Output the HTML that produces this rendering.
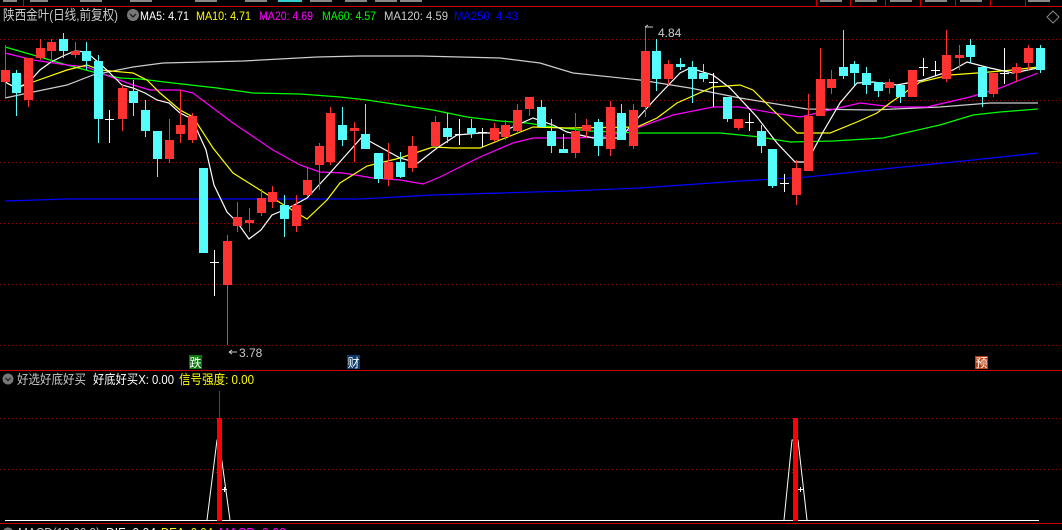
<!DOCTYPE html>
<html><head><meta charset="utf-8"><style>
html,body{margin:0;padding:0;background:#000;width:1062px;height:530px;overflow:hidden}
svg{display:block}
text{font-family:"Liberation Sans","Noto Sans CJK SC",sans-serif}
</style></head><body>
<svg width="1062" height="530" xmlns="http://www.w3.org/2000/svg">
<rect width="1062" height="530" fill="#000"/>
<g fill="#888"><rect x="3" y="0" width="14" height="2"/><rect x="30" y="0" width="18" height="2"/><rect x="80" y="0" width="22" height="2"/><rect x="130" y="0" width="22" height="2"/><rect x="195" y="0" width="22" height="2"/><rect x="245" y="0" width="22" height="2"/><rect x="310" y="0" width="22" height="2"/><rect x="345" y="0" width="22" height="2"/><rect x="375" y="0" width="22" height="2"/><rect x="400" y="0" width="22" height="2"/><rect x="820" y="0" width="22" height="2"/><rect x="855" y="0" width="22" height="2"/><rect x="890" y="0" width="22" height="2"/><rect x="925" y="0" width="22" height="2"/><rect x="960" y="0" width="22" height="2"/><rect x="1028" y="0" width="22" height="2"/></g>
<rect x="278" y="0" width="24" height="2" fill="#3cc"/>
<rect x="0" y="6" width="1062" height="1" fill="#c00"/>
<g fill="#c00"><rect x="23" y="0" width="1" height="6"/><rect x="816" y="0" width="1" height="6"/><rect x="850" y="0" width="1" height="6"/><rect x="885" y="0" width="1" height="6"/><rect x="920" y="0" width="1" height="6"/><rect x="955" y="0" width="1" height="6"/><rect x="990" y="0" width="1" height="6"/><rect x="1025" y="0" width="1" height="6"/></g>
<text x="3" y="20" font-size="14" fill="#c8c8c8" textLength="115" lengthAdjust="spacingAndGlyphs">陕西金叶(日线,前复权)</text>
<circle cx="133" cy="15" r="6" fill="#777"/><path d="M130 14l3 3 3-3" stroke="#222" stroke-width="1.5" fill="none"/>
<g font-size="12"><text x="140" y="20" fill="#fff" textLength="49" lengthAdjust="spacingAndGlyphs">MA5: 4.71</text><text x="196" y="20" fill="#ff0" textLength="55" lengthAdjust="spacingAndGlyphs">MA10: 4.71</text><text x="259" y="20" fill="#f0f" textLength="54" lengthAdjust="spacingAndGlyphs">MA20: 4.69</text><text x="322" y="20" fill="#0f0" textLength="54" lengthAdjust="spacingAndGlyphs">MA60: 4.57</text><text x="384" y="20" fill="#ccc" textLength="64" lengthAdjust="spacingAndGlyphs">MA120: 4.59</text><text x="454" y="20" fill="#00f" textLength="64" lengthAdjust="spacingAndGlyphs">MA250: 4.43</text></g>
<path d="M1053 11l6 6-6 6-6-6z" stroke="#888" fill="none"/>
<g stroke="#900" stroke-dasharray="1 3"><path d="M0 39.5H1062M0 100.5H1062M0 162.5H1062M0 223.5H1062M0 284.5H1062M0 345.5H1062M0 418.5H1062M0 469.5H1062"/></g>
<g fill="none" stroke-width="1.2">
<polyline stroke="#ccc" points="5,98 33,92 67,85 93,75 133,67 163,63 243,61 317,57 360,56 420,56 500,58 540,63 573,73 640,80 690,88 740,98 807,109 873,110 940,107 990,103 1038,103"/>
<polyline stroke="#00f" points="5,201 67,199 200,199 340,199 360,199 433,195 500,193 567,191 640,188 740,181 807,177 873,170 973,160 1038,153"/>
<polyline stroke="#0f0" points="5,47 33,55 67,65 97,73 120,78 140,79 173,83 217,88 253,93 300,94 340,97 367,100 400,105 433,110 467,117 500,121 527,123 553,127 590,131 637,133 720,133 760,137 790,142 833,141 883,138 900,134 940,125 973,115 1000,112 1038,109"/>
<polyline stroke="#f0f" points="5,53 33,60 67,65 87,67 100,73 133,85 150,90 180,90 193,93 233,123 273,150 300,165 320,172 343,173 373,178 400,180 423,184 440,177 460,167 480,157 513,143 533,138 573,138 600,137 620,133 637,128 673,115 713,107 740,107 773,113 800,117 830,110 860,103 893,107 927,107 970,97 1000,88 1020,80 1038,73"/>
<polyline stroke="#ff0" points="5,82 17,88 33,82 67,70 87,65 100,70 133,73 147,80 160,93 180,110 193,117 213,148 233,173 260,190 287,207 307,219 327,200 340,183 367,166 400,158 433,147 453,148 480,148 500,140 533,127 567,128 637,127 657,118 677,103 713,87 740,85 753,90 773,110 797,133 830,133 857,122 877,113 890,103 920,82 950,75 977,73 1013,70 1038,67"/>
<polyline stroke="#fff" points="5,82 16,88 28,83 40,70 51,62 63,56 75,51 86,52 98,62 109,72 122,85 133,88 145,93 157,100 169,103 180,113 192,119 206,150 214,185 227,212 237,222 249,239 261,230 272,215 284,210 296,204 307,198 330,173 362,137 380,147 400,158 418,163 437,148 457,135 480,133 500,133 517,125 533,118 553,125 567,132 593,138 620,138 637,119 657,97 680,73 690,68 713,75 730,88 757,117 777,143 795,162 807,162 823,132 840,103 857,83 873,82 897,85 923,80 953,70 967,62 990,68 1013,73 1038,68"/>
</g>
<path stroke="#ff3232" fill="none" d="M5.5 45V97M28.5 58V107M40.5 39V60M51.5 39V63M75.5 42V58M122.5 85V131M169.5 119V163M180.5 90V143M192.5 113V143M227.5 235V345M237.5 202V232M249.5 208V232M261.5 189V216M272.5 186V208M296.5 195V232M307.5 168V197M319.5 143V190M330.5 107V165M354.5 122V162M388.5 143V186M412.5 136V172M435.5 116V146M494.5 123V142M505.5 120V140M517.5 104V133M529.5 97V116M575.5 113V158M586.5 119V138M610.5 101V156M633.5 104V149M645.5 27V117M668.5 60V85M738.5 119V130M796.5 160V205M808.5 94V171M820.5 48V116M831.5 70V94M889.5 79V94M912.5 70V97M946.5 30V82M959.5 45V70M993.5 73V97M1016.5 63V82M1028.5 45V70"/>
<g fill="#ff3232">
<rect x="1" y="70" width="9" height="12"/><rect x="24" y="58" width="9" height="42"/><rect x="36" y="48" width="9" height="10"/><rect x="47" y="42" width="9" height="9"/><rect x="71" y="51" width="9" height="4"/><rect x="118" y="88" width="9" height="31"/><rect x="165" y="140" width="9" height="19"/><rect x="176" y="125" width="9" height="9"/><rect x="188" y="116" width="9" height="24"/><rect x="223" y="241" width="9" height="44"/><rect x="233" y="217" width="9" height="9"/><rect x="245" y="220" width="9" height="3"/><rect x="257" y="198" width="9" height="15"/><rect x="268" y="192" width="9" height="10"/><rect x="292" y="205" width="9" height="21"/><rect x="303" y="180" width="9" height="15"/><rect x="315" y="146" width="9" height="19"/><rect x="326" y="113" width="9" height="49"/><rect x="350" y="128" width="9" height="3"/><rect x="384" y="162" width="9" height="17"/><rect x="408" y="146" width="9" height="22"/><rect x="431" y="122" width="9" height="24"/><rect x="490" y="128" width="9" height="12"/><rect x="501" y="125" width="9" height="12"/><rect x="513" y="110" width="9" height="21"/><rect x="525" y="97" width="9" height="12"/><rect x="571" y="131" width="9" height="22"/><rect x="582" y="125" width="9" height="6"/><rect x="606" y="107" width="9" height="42"/><rect x="629" y="110" width="9" height="36"/><rect x="641" y="51" width="9" height="56"/><rect x="664" y="64" width="9" height="15"/><rect x="734" y="119" width="9" height="9"/><rect x="792" y="168" width="9" height="27"/><rect x="804" y="116" width="9" height="55"/><rect x="816" y="79" width="9" height="37"/><rect x="827" y="79" width="9" height="9"/><rect x="885" y="82" width="9" height="6"/><rect x="908" y="70" width="9" height="27"/><rect x="942" y="55" width="9" height="24"/><rect x="955" y="55" width="9" height="3"/><rect x="989" y="73" width="9" height="21"/><rect x="1012" y="67" width="9" height="6"/><rect x="1024" y="48" width="9" height="15"/>
</g>
<path stroke="#54fcfc" fill="none" d="M16.5 70V116M63.5 33V58M86.5 42V70M98.5 55V143M133.5 80V116M145.5 100V137M157.5 131V177M203.5 168V253M284.5 195V237M342.5 107V146M365.5 104V149M378.5 153V183M400.5 152V178M447.5 113V143M471.5 119V138M541.5 100V127M551.5 119V153M563.5 134V153M598.5 119V156M621.5 104V140M656.5 39V91M680.5 58V70M692.5 61V103M703.5 64V82M727.5 97V122M761.5 125V153M772.5 149V188M843.5 30V79M854.5 61V85M866.5 67V94M878.5 82V97M900.5 85V103M970.5 39V63M982.5 67V107M1040.5 45V73"/>
<g fill="#54fcfc">
<rect x="12" y="73" width="9" height="20"/><rect x="59" y="39" width="9" height="12"/><rect x="82" y="51" width="9" height="10"/><rect x="94" y="61" width="9" height="58"/><rect x="129" y="91" width="9" height="12"/><rect x="141" y="110" width="9" height="21"/><rect x="153" y="131" width="9" height="28"/><rect x="199" y="168" width="9" height="85"/><rect x="280" y="205" width="9" height="14"/><rect x="338" y="125" width="9" height="15"/><rect x="361" y="134" width="9" height="15"/><rect x="374" y="153" width="9" height="26"/><rect x="396" y="162" width="9" height="15"/><rect x="443" y="128" width="9" height="9"/><rect x="467" y="128" width="9" height="6"/><rect x="537" y="107" width="9" height="20"/><rect x="547" y="131" width="9" height="15"/><rect x="559" y="149" width="9" height="4"/><rect x="594" y="122" width="9" height="24"/><rect x="617" y="113" width="9" height="27"/><rect x="652" y="51" width="9" height="28"/><rect x="676" y="64" width="9" height="3"/><rect x="688" y="67" width="9" height="12"/><rect x="699" y="73" width="9" height="6"/><rect x="723" y="97" width="9" height="22"/><rect x="757" y="131" width="9" height="15"/><rect x="768" y="149" width="9" height="37"/><rect x="839" y="67" width="9" height="9"/><rect x="850" y="64" width="9" height="9"/><rect x="862" y="73" width="9" height="12"/><rect x="874" y="82" width="9" height="9"/><rect x="896" y="85" width="9" height="12"/><rect x="966" y="45" width="9" height="12"/><rect x="978" y="67" width="9" height="30"/><rect x="1036" y="48" width="9" height="22"/>
</g>
<path stroke="#fff" fill="none" d="M109.5 110V143M105 119.5H114M214.5 250V296M210 262.5H219M459.5 119V145M455 134.5H464M482.5 128V147M478 132.5H487M713.5 73V107M709 82.5H718M749.5 113V131M745 122.5H754M784.5 174V192M780 183.5H789M923.5 58V76M919 67.5H928M935.5 61V76M931 70.5H940M1004.5 48V84M1000 73.5H1009"/>
<path d="M645 27l3-2M645 27h8" stroke="#ccc" fill="none"/><text x="658" y="37" font-size="12" fill="#ccc">4.84</text>
<path d="M229 352h8M229 352l3-2M229 352l3 2" stroke="#ccc" fill="none"/><text x="239" y="357" font-size="12" fill="#ccc">3.78</text>
<rect x="189" y="355" width="13" height="14" fill="#087808"/><text x="189.5" y="367" font-size="12" fill="#fff">跌</text>
<rect x="347" y="355" width="13" height="14" fill="#0a3a6a"/><text x="347.5" y="367" font-size="12" fill="#fff">财</text>
<rect x="975" y="356" width="13" height="13" fill="#b84010"/><text x="975.5" y="367" font-size="12" fill="#fff">预</text>
<rect x="0" y="370" width="1062" height="1" fill="#c00"/>
<circle cx="8" cy="379" r="5.5" fill="#777"/><path d="M5.5 378l2.5 2.5 2.5-2.5" stroke="#222" stroke-width="1.3" fill="none"/>
<g font-size="13"><text x="17" y="384" fill="#c8c8c8" textLength="69" lengthAdjust="spacingAndGlyphs">好选好底好买</text><text x="93" y="384" fill="#fff" textLength="81" lengthAdjust="spacingAndGlyphs">好底好买X: 0.00</text><text x="179" y="384" fill="#ff0" textLength="75" lengthAdjust="spacingAndGlyphs">信号强度: 0.00</text></g>
<path d="M5 520.5H1039" stroke="#fff"/>
<polyline points="207,520 217,440 219,440 230,520" stroke="#fff" fill="none"/>
<polyline points="784,520 792,440 798,440 807,520" stroke="#fff" fill="none"/>
<rect x="217" y="418" width="5" height="103" fill="#f00"/><rect x="219" y="391" width="1" height="30" fill="#f00"/>
<rect x="793" y="418" width="5" height="103" fill="#f00"/>
<path d="M219 469l-3 4h6z" fill="#f00"/><path d="M795 469l-3 4h6z" fill="#f00"/>
<path d="M222 489.5h5M224.5 487v5M798 489.5h5M800.5 487v5" stroke="#fff"/>
<rect x="0" y="523" width="1062" height="1" fill="#c00"/>
<circle cx="8" cy="533" r="5.5" fill="#777"/>
<g font-size="13"><text x="18" y="537" fill="#c8c8c8" textLength="82" lengthAdjust="spacingAndGlyphs">MACD(12,26,9)</text><text x="106" y="537" fill="#fff" textLength="50" lengthAdjust="spacingAndGlyphs">DIF: 0.04</text><text x="161" y="537" fill="#ff0" textLength="52" lengthAdjust="spacingAndGlyphs">DEA: 0.04</text><text x="219" y="537" fill="#f0f" textLength="67" lengthAdjust="spacingAndGlyphs">MACD: 0.00</text></g>
</svg>
</body></html>
